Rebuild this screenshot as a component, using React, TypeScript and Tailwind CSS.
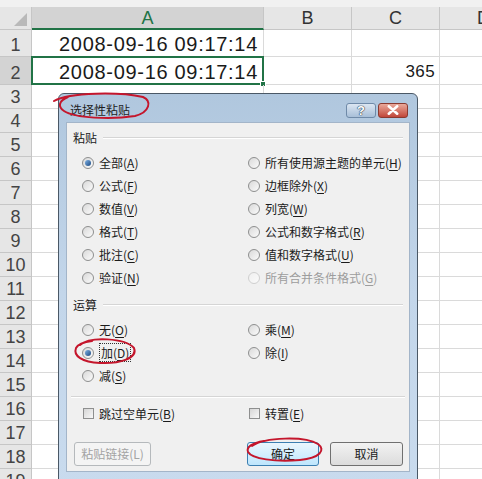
import type { ReactNode } from 'react'

type Opt = { label: string; key: string; checked?: boolean; disabled?: boolean; focus?: boolean }

const pasteLeft: Opt[] = [
  { label: '全部', key: 'A', checked: true },
  { label: '公式', key: 'F' },
  { label: '数值', key: 'V' },
  { label: '格式', key: 'T' },
  { label: '批注', key: 'C' },
  { label: '验证', key: 'N' },
]

const pasteRight: Opt[] = [
  { label: '所有使用源主题的单元', key: 'H' },
  { label: '边框除外', key: 'X' },
  { label: '列宽', key: 'W' },
  { label: '公式和数字格式', key: 'R' },
  { label: '值和数字格式', key: 'U' },
  { label: '所有合并条件格式', key: 'G', disabled: true },
]

const opsLeft: Opt[] = [
  { label: '无', key: 'O' },
  { label: '加', key: 'D', checked: true, focus: true },
  { label: '减', key: 'S' },
]

const opsRight: Opt[] = [
  { label: '乘', key: 'M' },
  { label: '除', key: 'I' },
]

const rows = Array.from({ length: 19 }, (_, i) => i + 1)

function Radio({ checked, disabled }: { checked?: boolean; disabled?: boolean }) {
  return (
    <span
      className={`w-[12px] h-[12px] shrink-0 rounded-full border flex items-center justify-center bg-gradient-to-br ${
        disabled ? 'border-[#cfcfcf] from-[#f0f0f0] to-[#fafafa]' : 'border-[#8e8f8f] from-[#d9d9d9] to-[#fbfbfb]'
      }`}
    >
      {checked && <span className="w-[6px] h-[6px] rounded-full bg-gradient-to-br from-[#7fb2e5] to-[#1b4a82]" />}
    </span>
  )
}

function Label({ opt }: { opt: Opt }) {
  const text = (
    <>
      {opt.label}(<span className="underline underline-offset-2">{opt.key}</span>)
    </>
  )
  return (
    <span className={opt.disabled ? 'text-[#9d9d9d]' : 'text-[#1b1b1b]'}>
      {opt.focus ? <span className="border border-dotted border-[#333] px-[1px]">{text}</span> : text}
    </span>
  )
}

function OptRow({ opt }: { opt: Opt }) {
  return (
    <div className="h-[23px] flex items-center gap-[5px]">
      <Radio checked={opt.checked} disabled={opt.disabled} />
      <Label opt={opt} />
    </div>
  )
}

function Group({ title }: { title: string }) {
  return (
    <div className="h-[18px] flex items-center gap-[6px]">
      <span className="text-[#1b1b1b]">{title}</span>
      <span className="flex-1 border-t border-[#d5d5d5] border-b-white border-b" />
    </div>
  )
}

function Check({ label, k }: { label: string; k: string }) {
  return (
    <div className="h-[23px] flex items-center gap-[5px]">
      <span className="w-[11px] h-[11px] shrink-0 border border-[#8e8f8f] bg-gradient-to-br from-[#d6d6d6] to-[#f8f8f8]" />
      <span className="text-[#1b1b1b]">
        {label}(<span className="underline underline-offset-2">{k}</span>)
      </span>
    </div>
  )
}

function Btn({ children, kind }: { children: ReactNode; kind: 'disabled' | 'default' | 'normal' }) {
  const cls =
    kind === 'disabled'
      ? 'border-[#b5b9bc] bg-[#f4f4f4] text-[#a3a3a3]'
      : kind === 'default'
        ? 'border-[#3c7fb1] bg-gradient-to-b from-[#eaf6fd] to-[#bee6fd] text-[#1b1b1b]'
        : 'border-[#707070] bg-gradient-to-b from-[#f2f2f2] to-[#dcdcdc] text-[#1b1b1b]'
  return (
    <div className={`h-[24px] rounded-[3px] border flex items-center justify-center ${cls}`}>{children}</div>
  )
}

export default function App() {
  return (
    <div className="relative w-[482px] h-[479px] overflow-hidden bg-white font-['Liberation_Sans','Noto_Sans_CJK_SC',sans-serif]">
      {/* sheet */}
      <div className="h-[7px] bg-[#f1f1f1]" />
      <div className="flex h-[23px] text-[18px] leading-none">
        <div className="w-[32px] shrink-0 bg-[#e6e6e6] border-r border-b border-[#c6c6c6] relative">
          <svg className="absolute right-[4px] bottom-[3px]" width="13" height="13" viewBox="0 0 13 13">
            <polygon points="13,0 13,13 0,13" fill="#b9b9b9" />
          </svg>
        </div>
        <div className="w-[232px] shrink-0 bg-[#d3d3d3] border-r border-[#c6c6c6] border-b-2 border-b-[#217346] flex items-center justify-center text-[#217346]">
          A
        </div>
        {['B', 'C', 'D'].map((c) => (
          <div
            key={c}
            className="w-[88px] shrink-0 bg-[#e6e6e6] border-r border-b border-[#c6c6c6] flex items-center justify-center text-[#333]"
          >
            {c}
          </div>
        ))}
      </div>
      {rows.map((r) => (
        <div key={r} className={`flex ${r === 1 ? 'h-[27px]' : r === 2 ? 'h-[28px]' : 'h-[24px]'}`}>
          <div
            className={`w-[32px] shrink-0 border-r border-b border-[#c6c6c6] flex items-center justify-center text-[18px] leading-none text-[#444] ${
              r === 2 ? 'bg-[#d3d3d3]' : 'bg-[#e6e6e6]'
            } ${r <= 2 ? 'pt-[4px]' : ''}`}
          >
            {r}
          </div>
          <div className="w-[232px] shrink-0 border-r border-b border-[#dadada] relative flex items-center justify-end pr-[5px] text-[20px] tracking-[0.7px] text-[#1a1a1a]">
            {r <= 2 && <span className="pt-[2px]">2008-09-16 09:17:14</span>}
            {r === 2 && (
              <div className="absolute -top-[1px] -left-[1px] -right-[1px] -bottom-[1px] border-2 border-[#217346]">
                <span className="absolute -right-[4px] -bottom-[4px] w-[6px] h-[6px] bg-[#217346] border border-white" />
              </div>
            )}
          </div>
          <div className="w-[88px] shrink-0 border-r border-b border-[#dadada]" />
          <div className="w-[88px] shrink-0 border-r border-b border-[#dadada] flex items-center justify-end pr-[4px] text-[17px] tracking-[0.4px] text-[#1a1a1a]">
            {r === 2 && <span className="pt-[2px]">365</span>}
          </div>
          <div className="w-[88px] shrink-0 border-r border-b border-[#dadada]" />
        </div>
      ))}

      {/* dialog */}
      <div className="absolute left-[58px] top-[93px] w-[360px] h-[400px] rounded-t-[6px] border border-[#4a5866] bg-gradient-to-b from-[#b0c7de] via-[#c3d6ea] to-[#c9dbee] font-['Noto_Sans_CJK_SC',sans-serif] text-[12px] leading-none">
        <div className="h-[28px] pt-[4px] flex items-center pl-[11px] pr-[9px]">
          <span className="text-[#1e1e1e] flex-1">选择性粘贴</span>
          <div className="flex gap-[2px]">
            <div className="w-[30px] h-[15px] rounded-[3px] border border-[#6f8aa8] bg-gradient-to-b from-[#dbe6f2] to-[#a8bfd8] flex items-center justify-center">
              <span className="font-['Liberation_Sans',sans-serif] text-[13px] font-bold text-white [text-shadow:0_0_1px_#2a3d55,0_0_1px_#2a3d55,0_0_1px_#2a3d55]">
                ?
              </span>
            </div>
            <div className="w-[30px] h-[15px] rounded-[3px] border border-[#8a3a30] bg-gradient-to-b from-[#e9a99b] to-[#c0453a] flex items-center justify-center">
              <svg width="12" height="10" viewBox="0 0 12 10">
                <path d="M1.8 1.3 L10.2 8.7 M10.2 1.3 L1.8 8.7" stroke="#fff" strokeWidth="2.6" strokeLinecap="round" />
              </svg>
            </div>
          </div>
        </div>
        <div className="mx-[7px] w-[344px] h-[350px] bg-[#f0f0f0] border border-[#a3b5c9] px-[6px] pt-[6px]">
          <Group title="粘贴" />
          <div className="mt-[4px] pl-[9px] grid grid-cols-[166px_1fr]">
            <div>
              {pasteLeft.map((o) => (
                <OptRow key={o.key} opt={o} />
              ))}
            </div>
            <div>
              {pasteRight.map((o) => (
                <OptRow key={o.key} opt={o} />
              ))}
            </div>
          </div>
          <div className="mt-[7px]">
            <Group title="运算" />
          </div>
          <div className="mt-[4px] pl-[9px] grid grid-cols-[166px_1fr]">
            <div>
              {opsLeft.map((o) => (
                <OptRow key={o.key} opt={o} />
              ))}
            </div>
            <div>
              {opsRight.map((o) => (
                <OptRow key={o.key} opt={o} />
              ))}
            </div>
          </div>
          <div className="mt-[9px] mx-[-2px] border-t border-[#d5d5d5] border-b border-b-white" />
          <div className="mt-[4px] pl-[10px] grid grid-cols-[166px_1fr]">
            <Check label="跳过空单元" k="B" />
            <Check label="转置" k="E" />
          </div>
          <div className="mt-[17px] flex items-center">
            <div className="ml-[1px] w-[77px]">
              <Btn kind="disabled">粘贴链接(L)</Btn>
            </div>
            <div className="ml-[96px] w-[72px]">
              <Btn kind="default">确定</Btn>
            </div>
            <div className="ml-[11px] w-[73px]">
              <Btn kind="normal">取消</Btn>
            </div>
          </div>
        </div>
      </div>

      {/* red pen annotations */}
      <svg className="absolute inset-0 pointer-events-none" width="482" height="479" viewBox="0 0 482 479">
        <g fill="none" stroke="#c4162c" strokeWidth="2" strokeLinecap="round" strokeLinejoin="round">
          <path d="M54 101 C70 92 120 92 143 97 C152 101 150 112 135 116 C110 120 75 118 64 111 C58 107 58 101 68 97" />
          <path d="M80 345 C90 336 125 338 134 348 C138 358 120 364 100 363 C82 362 73 356 76 348 C78 344 84 342 92 341" />
          <path d="M252 446 C265 437 305 436 318 444 C326 450 320 458 300 460 C275 462 252 459 248 452 C246 447 252 443 264 441" />
        </g>
      </svg>
    </div>
  )
}
